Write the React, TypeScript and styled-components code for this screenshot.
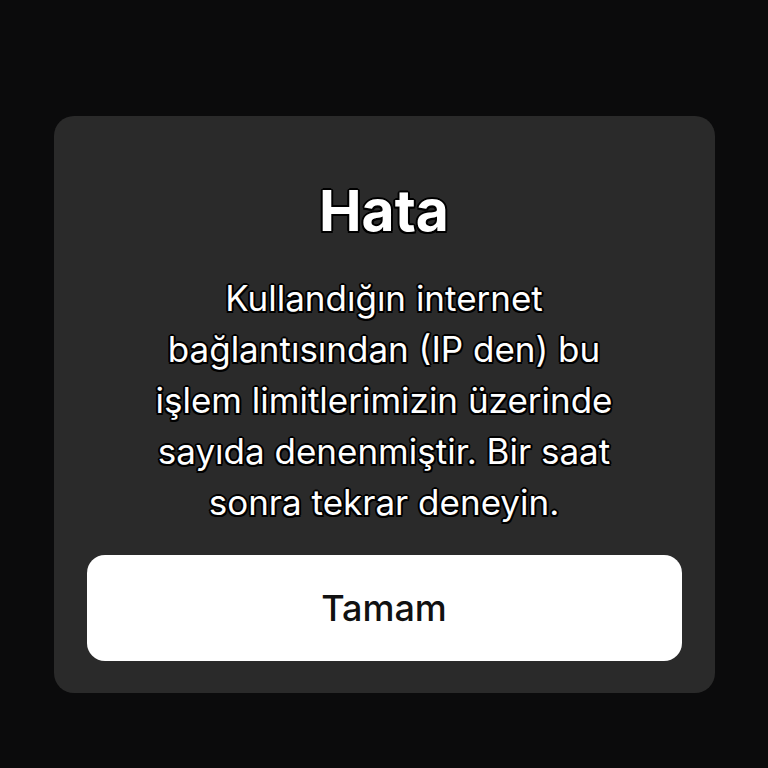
import React from "react";
import styled, { createGlobalStyle } from "styled-components";

const Global = createGlobalStyle`
  html, body { margin: 0; padding: 0; background: #0b0b0c; }
  body { font-family: "Inter", "Noto Sans", sans-serif; }
`;

const Screen = styled.div`
  box-sizing: border-box;
  width: 768px;
  height: 768px;
  padding-top: 116px;
  display: flex;
  align-items: flex-start;
  justify-content: center;
  background: #0b0b0c;
`;

const Card = styled.div`
  box-sizing: border-box;
  width: 661px;
  height: 577px;
  background: #2a2a2a;
  border-radius: 20px;
  padding: 60px 33px 32px;
  display: flex;
  flex-direction: column;
  align-items: center;
`;

const outline = `
  text-shadow: -1.5px -1.5px 0 #000, 1.5px -1.5px 0 #000, -1.5px 1.5px 0 #000, 1.5px 1.5px 0 #000,
    0 2px 0 #000, 0 -2px 0 #000, 2px 0 0 #000, -2px 0 0 #000;
`;

const Title = styled.h1`
  margin: 0;
  color: #fff;
  font-size: 57px;
  font-weight: 700;
  line-height: 70px;
  ${outline}
`;

const Message = styled.p`
  margin: 27px 0 0;
  color: #fff;
  font-size: 35px;
  font-weight: 400;
  line-height: 51px;
  text-align: center;
  ${outline}
`;

const Button = styled.button`
  margin-top: auto;
  width: 100%;
  height: 106px;
  border: none;
  border-radius: 18px;
  background: #fff;
  color: #111;
  font-family: "Inter", "Noto Sans", sans-serif;
  font-size: 36px;
  font-weight: 500;
  cursor: pointer;
`;

const lines = [
  "Kullandığın internet",
  "bağlantısından (IP den) bu",
  "işlem limitlerimizin üzerinde",
  "sayıda denenmiştir. Bir saat",
  "sonra tekrar deneyin.",
];

export default function App() {
  return (
    <>
      <Global />
      <Screen>
        <Card>
          <Title>Hata</Title>
          <Message>
            {lines.map((l, i) => (
              <React.Fragment key={i}>
                {l}
                {i < lines.length - 1 && <br />}
              </React.Fragment>
            ))}
          </Message>
          <Button>Tamam</Button>
        </Card>
      </Screen>
    </>
  );
}
